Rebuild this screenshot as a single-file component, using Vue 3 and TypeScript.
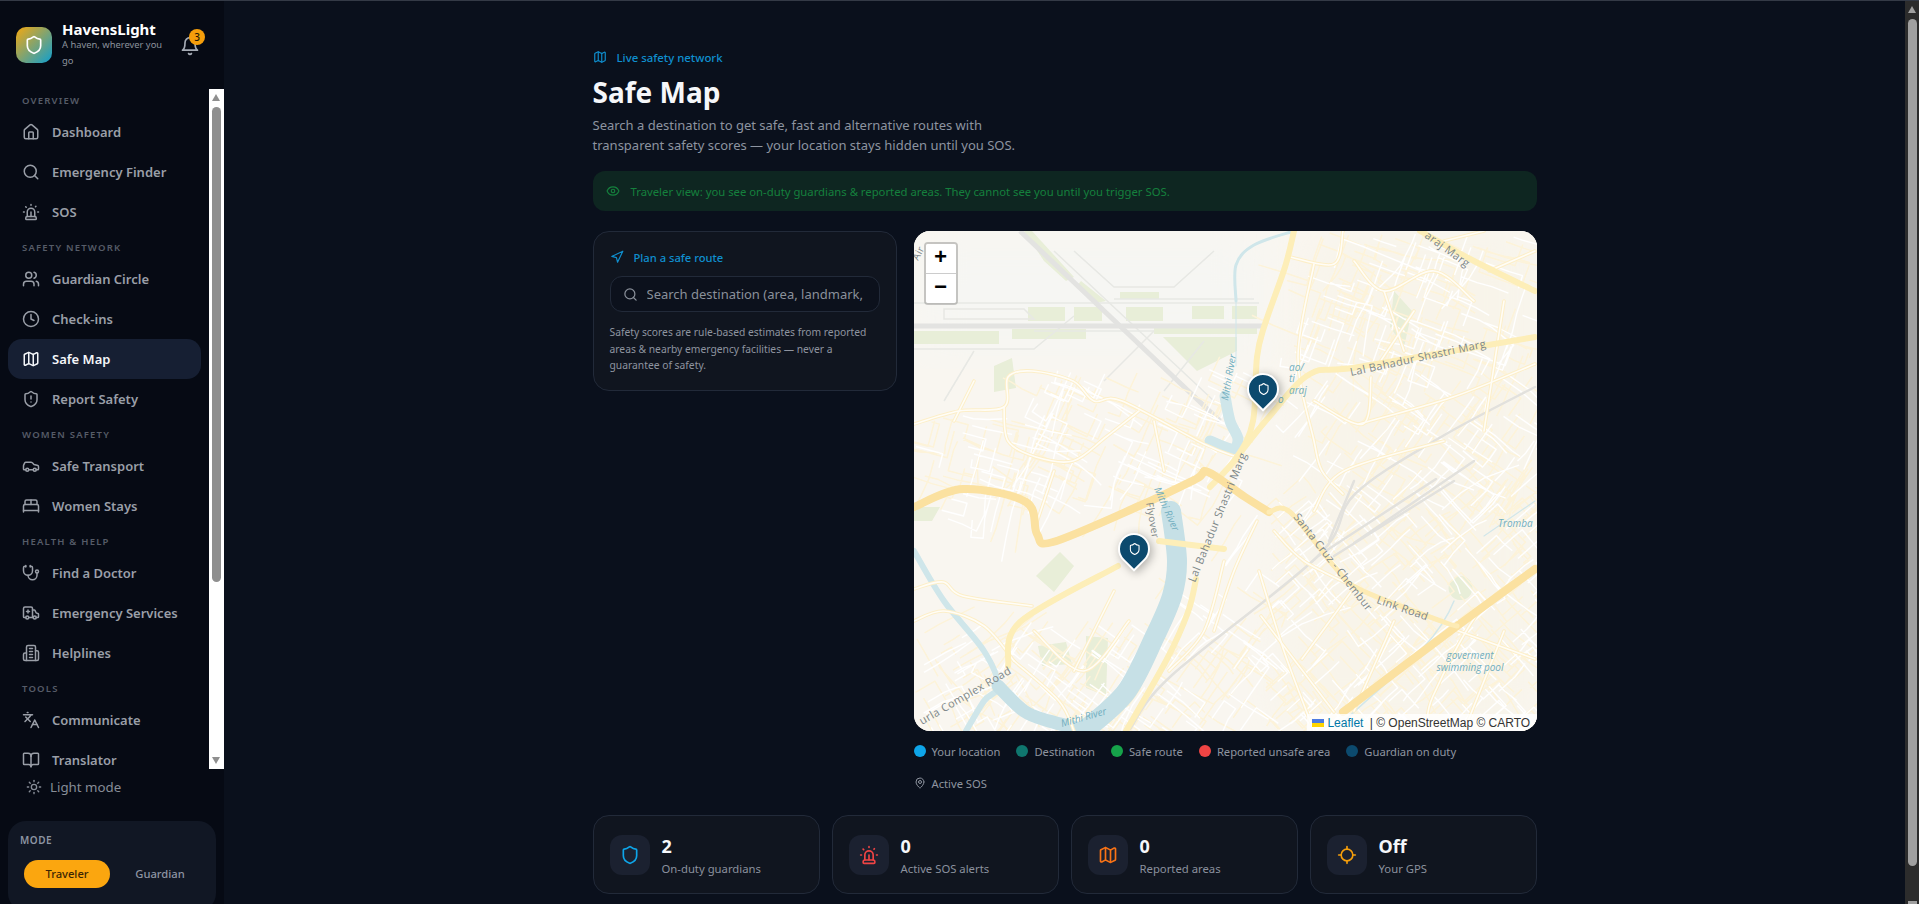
<script setup lang="ts">
const c = (x: number, y: number, r: number) => `M${x - r} ${y}a${r} ${r} 0 1 0 ${r * 2} 0a${r} ${r} 0 1 0 ${-r * 2} 0`

const shield = 'M20 13c0 5-3.5 7.5-7.66 8.95a1 1 0 0 1-.67-.01C7.5 20.5 4 18 4 13V6a1 1 0 0 1 1-1c2 0 4.5-1.2 6.24-2.72a1.17 1.17 0 0 1 1.52 0C14.51 3.81 17 5 19 5a1 1 0 0 1 1 1z'

const icons: Record<string, string[]> = {
  shield: [shield],
  bell: ['M6 8a6 6 0 0 1 12 0c0 7 3 9 3 9H3s3-2 3-9', 'M10.3 21a1.94 1.94 0 0 0 3.4 0'],
  house: ['M15 21v-8a1 1 0 0 0-1-1h-4a1 1 0 0 0-1 1v8', 'M3 10a2 2 0 0 1 .709-1.528l7-5.999a2 2 0 0 1 2.582 0l7 5.999A2 2 0 0 1 21 10v9a2 2 0 0 1-2 2H5a2 2 0 0 1-2-2z'],
  search: [c(11, 11, 8), 'm21 21-4.3-4.3'],
  siren: ['M7 18v-6a5 5 0 1 1 10 0v6', 'M5 21a1 1 0 0 0 1 1h12a1 1 0 0 0 1-1v-1a2 2 0 0 0-2-2H7a2 2 0 0 0-2 2z', 'M21 12h1', 'M18.5 4.5 18 5', 'M2 12h1', 'M12 2v1', 'm4.929 4.929.707.707', 'M12 12v6'],
  users: ['M16 21v-2a4 4 0 0 0-4-4H6a4 4 0 0 0-4 4v2', c(9, 7, 4), 'M22 21v-2a4 4 0 0 0-3-3.87', 'M16 3.13a4 4 0 0 1 0 7.75'],
  clock: [c(12, 12, 10), 'M12 6v6l4 2'],
  map: ['M14.106 5.553a2 2 0 0 0 1.788 0l3.659-1.83A1 1 0 0 1 21 4.619v12.764a1 1 0 0 1-.553.894l-4.553 2.277a2 2 0 0 1-1.788 0l-4.212-2.106a2 2 0 0 0-1.788 0l-3.659 1.83A1 1 0 0 1 3 19.381V6.618a1 1 0 0 1 .553-.894l4.553-2.277a2 2 0 0 1 1.788 0z', 'M15 5.764v15', 'M9 3.236v15'],
  shieldAlert: [shield, 'M12 8v4', 'M12 16h.01'],
  car: ['M19 17h2c.6 0 1-.4 1-1v-3c0-.9-.7-1.7-1.5-1.9C18.7 10.6 16 10 16 10s-1.3-1.4-2.2-2.3c-.5-.4-1.1-.7-1.8-.7H5c-.6 0-1.1.4-1.4.9l-1.4 2.9A3.7 3.7 0 0 0 2 12v4c0 .6.4 1 1 1h2', c(7, 17, 2), 'M9 17h6', c(17, 17, 2)],
  bed: ['M2 20v-8a2 2 0 0 1 2-2h16a2 2 0 0 1 2 2v8', 'M4 10V6a2 2 0 0 1 2-2h12a2 2 0 0 1 2 2v4', 'M12 4v6', 'M2 18h20'],
  stethoscope: ['M11 2v2', 'M5 2v2', 'M5 3H4a2 2 0 0 0-2 2v4a6 6 0 0 0 12 0V5a2 2 0 0 0-2-2h-1', 'M8 15a6 6 0 0 0 12 0v-3', c(20, 10, 2)],
  ambulance: ['M10 10H6', 'M14 18V6a2 2 0 0 0-2-2H4a2 2 0 0 0-2 2v11a1 1 0 0 0 1 1h2', 'M19 18h2a1 1 0 0 0 1-1v-3.28a1 1 0 0 0-.684-.948l-1.923-.641a1 1 0 0 1-.578-.502l-1.539-3.076A1 1 0 0 0 16.382 8H14', 'M8 8v4', 'M9 18h6', c(17, 18, 2), c(7, 18, 2)],
  building: ['M6 22V4a2 2 0 0 1 2-2h8a2 2 0 0 1 2 2v18Z', 'M6 12H4a2 2 0 0 0-2 2v6a2 2 0 0 0 2 2h2', 'M18 9h2a2 2 0 0 1 2 2v9a2 2 0 0 1-2 2h-2', 'M10 6h4', 'M10 10h4', 'M10 14h4', 'M10 18h4'],
  languages: ['m5 8 6 6', 'm4 14 6-6 2-3', 'M2 5h12', 'M7 2h1', 'm22 22-5-10-5 10', 'M14 18h6'],
  book: ['M12 7v14', 'M3 18a1 1 0 0 1-1-1V4a1 1 0 0 1 1-1h5a4 4 0 0 1 4 4 4 4 0 0 1 4-4h5a1 1 0 0 1 1 1v13a1 1 0 0 1-1 1h-6a3 3 0 0 0-3 3 3 3 0 0 0-3-3z'],
  sun: [c(12, 12, 4), 'M12 2v2', 'M12 20v2', 'm4.93 4.93 1.41 1.41', 'm17.66 17.66 1.41 1.41', 'M2 12h2', 'M20 12h2', 'm6.34 17.66-1.41 1.41', 'm19.07 4.93-1.41 1.41'],
  eye: ['M2.062 12.348a1 1 0 0 1 0-.696 10.75 10.75 0 0 1 19.876 0 1 1 0 0 1 0 .696 10.75 10.75 0 0 1-19.876 0', c(12, 12, 3)],
  navigation: ['M3 11 22 2 13 21 11 13z'],
  pin: ['M20 10c0 4.993-5.539 10.193-7.399 11.799a1 1 0 0 1-1.202 0C9.539 20.193 4 14.993 4 10a8 8 0 0 1 16 0', c(12, 10, 3)],
  locate: ['M2 12h3', 'M19 12h3', 'M12 2v3', 'M12 19v3', c(12, 12, 7)],
}

const navGroups = [
  { title: 'Overview', items: [['house', 'Dashboard'], ['search', 'Emergency Finder'], ['siren', 'SOS']] },
  { title: 'Safety Network', items: [['users', 'Guardian Circle'], ['clock', 'Check-ins'], ['map', 'Safe Map'], ['shieldAlert', 'Report Safety']] },
  { title: 'Women Safety', items: [['car', 'Safe Transport'], ['bed', 'Women Stays']] },
  { title: 'Health & Help', items: [['stethoscope', 'Find a Doctor'], ['ambulance', 'Emergency Services'], ['building', 'Helplines']] },
  { title: 'Tools', items: [['languages', 'Communicate'], ['book', 'Translator']] },
]

const legend = [
  { label: 'Your location', color: '#0ea5e9' },
  { label: 'Destination', color: '#0f766e' },
  { label: 'Safe route', color: '#16a34a' },
  { label: 'Reported unsafe area', color: '#ef4444' },
  { label: 'Guardian on duty', color: '#0c4a6e' },
]

const stats = [
  { icon: 'shield', value: '2', label: 'On-duty guardians', color: '#0ea5e9' },
  { icon: 'siren', value: '0', label: 'Active SOS alerts', color: '#ef4444' },
  { icon: 'map', value: '0', label: 'Reported areas', color: '#f97316' },
  { icon: 'locate', value: 'Off', label: 'Your GPS', color: '#f59e0b' },
]

const pins = [
  { left: 333, top: 142 },
  { left: 204, top: 302 },
]

// turns "x y x y ..." into a smooth curve through the points
function smooth(points: string) {
  const n = points.trim().split(/\s+/).map(Number)
  const p: [number, number][] = []
  for (let i = 0; i < n.length; i += 2) p.push([n[i], n[i + 1]])
  let d = `M${p[0][0]} ${p[0][1]}`
  for (let i = 0; i < p.length - 1; i++) {
    const a = p[Math.max(i - 1, 0)]
    const b = p[i]
    const e = p[i + 1]
    const f = p[Math.min(i + 2, p.length - 1)]
    d += `C${(b[0] + (e[0] - a[0]) / 6).toFixed(1)} ${(b[1] + (e[1] - a[1]) / 6).toFixed(1)} ${(e[0] - (f[0] - b[0]) / 6).toFixed(1)} ${(e[1] - (f[1] - b[1]) / 6).toFixed(1)} ${e[0]} ${e[1]}`
  }
  return d
}

// map geometry, in px inside the 623x500 map box
const green = [
  'M0 100h85v13H0z', 'M98 98h74v10H98z', 'M240 96h103v7H240z', 'M114 76h37v14h-37z', 'M160 76h28v14h-28z', 'M212 76h37v14h-37z', 'M278 75h32v13h-32z', 'M318 75h25v13h-25z',
  'M206 61h39v7h-39z', 'M249 106h74v14l-40 20z', 'M110 0h8l42 46-8 4-22-20z', 'M167 50l25 20-10 2-20-16z', 'M80 135l18-8 4 30-22 4z',
  'M122 345l24-24 14 14-20 26z', 'M124 415l28-4 6 22-30 2z', 'M172 405l22 2-2 58-20-8z', 'M480 60l18 20-8 36-14-20z', 'M546 345a12 12 0 1 0 1 0z', 'M0 276h26l-8 14H0z',
]
const airport = [
  'M0 72H345', 'M0 118H120L160 85', 'M140 20 300 170', 'M200 68H340', 'M300 20l-40 36H200L160 20', 'M60 120 30 170', 'M240 100 190 150',
  'M30 78H110L120 88H30z', 'M120 100H240', 'M290 110 250 160',
]
const secondary = [
  '0 193 45 180 90 176 94 146 118 140 159 150 180 170 208 170 290 213 323 226',
  '90 176 94 210 122 226 159 230 192 206 225 180',
  '400 33 384 126 400 210 408 240 429 263',
  '445 193 539 166 621 133',
  '400 170 449 193 457 146',
  '429 0 420 33 376 26',
  '0 358 29 351 49 365 118 375',
  '347 385 420 481',
  '437 361 388 428',
  '621 338 567 378 519 465 514 495',
  '539 398 621 428',
  '445 358 390 330 360 300',
  '100 430 145 470 160 500',
  '0 390 30 380 70 395 100 430',
  '120 400 170 440 215 390',
  '200 360 160 440',
  '500 80 460 140',
  '530 10 570 0',
  '575 40 621 20',
  '590 70 570 200',
  '343 290 320 340 300 400',
  '400 280 430 240 530 210',
  '480 390 440 480',
  '590 400 550 500',
  '310 330 290 400 255 440',
  '440 30 470 60 520 40 560 70',
  '470 60 490 120',
  '345 340 370 420 400 500',
  '60 150 40 190',
  '140 240 120 300',
  '240 190 250 240',
].map(smooth)
const primary = [
  '380 0 371 36 351 93 343 126 339 190 323 226 296 256',
  '323 226 355 186 396 143 445 136 621 106',
  '282 348 274 381 253 428 212 500',
  '245 310 310 318',
  '204 335 106 391 94 435',
  '506 0 560 30 621 60',
].map(smooth)
const major = [
  '0 276 49 258 112 271 123 303 139 311 225 275 282 248 294 241 331 266 355 281',
  '429 481 539 398 621 338',
].map(smooth)
const linkRoad = smooth('355 281 376 281 420 335 445 358 527 390 543 395')
const rail = ['621 156 527 206 441 263 404 325 257 445 216 498', '522 248 404 325', '540 250 420 325', '440 250 415 310', '560 230 440 312'].map(smooth)
const river = {
  upper: smooth('380 0 340 14 322 34 322 70'),
  bend: smooth('311 165 316 190 324 208 318 218 296 210'),
  main: smooth('257 280 263 330 258 365 241 405 212 461 171 499'),
  west: smooth('0 320 30 370 70 420 84 455 70 470 52 500'),
  south: smooth('84 455 110 480 135 490 175 500'),
}

// visible parts only: the tiles cut most of these names at the map edge
const mapLabels = [
  { text: 'Mithi River', x: 314, y: 170, rot: -80, size: 10, water: true },
  { text: 'Lal Bahadur Shastri Marg', x: 437, y: 145, rot: -12, size: 11 },
  { text: 'araj Marg', x: 510, y: 6, rot: 36, size: 11 },
  { text: 'Air', x: 4, y: 30, rot: -62, size: 10 },
  { text: 'Lal Bahadur Shastri Marg', x: 281, y: 352, rot: -68, size: 11 },
  { text: 'Flyover', x: 232, y: 272, rot: 80, size: 10 },
  { text: 'urla Complex Road', x: 8, y: 494, rot: -30, size: 11 },
  { text: 'Mithi River', x: 148, y: 496, rot: -16, size: 10, water: true },
  { text: 'Mithi River', x: 240, y: 258, rot: 66, size: 10, water: true },
  { text: 'Santa Cruz - Chembur', x: 379, y: 286, rot: 52, size: 11 },
  { text: 'Link Road', x: 462, y: 372, rot: 19, size: 11 },
  { text: 'ao/', x: 375, y: 140, rot: 0, size: 10, water: true },
  { text: 'ti', x: 375, y: 151, rot: 0, size: 10, water: true },
  { text: 'araj', x: 375, y: 163, rot: 0, size: 10, water: true },
  { text: 'o', x: 364, y: 172, rot: 0, size: 10, water: true },
  { text: 'Tromba', x: 584, y: 296, rot: 0, size: 10, water: true },
]

// small streets: a seeded scatter so the town texture stays the same on every load
function streets(seed: number, scale: number) {
  let s = seed
  const rnd = () => (s = (s * 16807) % 2147483647) / 2147483647
  const zones = [
    [390, 0, 623, 130, 20, 50], [410, 140, 623, 260, 35, 40], [350, 260, 623, 400, -42, 60], [340, 400, 623, 500, -42, 50],
    [90, 390, 250, 500, 35, 35], [0, 400, 100, 500, -30, 14], [120, 140, 330, 260, 25, 40], [0, 180, 120, 270, 15, 16], [240, 330, 340, 500, -55, 18],
  ]
  let d = ''
  for (const [x0, y0, x1, y1, a, n] of zones) {
    for (let i = 0; i < n * scale; i++) {
      let x = x0 + rnd() * (x1 - x0)
      let y = y0 + rnd() * (y1 - y0)
      let ang = a + (rnd() > 0.5 ? 90 : 0)
      d += `M${x.toFixed(1)} ${y.toFixed(1)}`
      const legs = 2 + Math.floor(rnd() * 3)
      for (let k = 0; k < legs; k++) {
        const len = 8 + rnd() * 20
        x += Math.cos((ang * Math.PI) / 180) * len
        y += Math.sin((ang * Math.PI) / 180) * len
        d += `L${x.toFixed(1)} ${y.toFixed(1)}`
        ang += rnd() > 0.7 ? 90 : (rnd() - 0.5) * 24
      }
    }
  }
  return d
}
const smallStreets = streets(4217, 1.3)
const tinyStreets = streets(90331, 1.8)
</script>

<template>
  <div class="layout">
    <aside class="sidebar">
      <div class="brand">
        <div class="logo">
          <svg class="ic" viewBox="0 0 24 24" width="20" height="20"><path v-for="d in icons.shield" :key="d" :d="d" /></svg>
        </div>
        <div class="brand-text">
          <div class="brand-name">HavensLight</div>
          <div class="brand-sub">A haven, wherever you go</div>
        </div>
        <div class="bell">
          <svg class="ic" viewBox="0 0 24 24" width="20" height="20"><path v-for="d in icons.bell" :key="d" :d="d" /></svg>
          <span class="badge">3</span>
        </div>
      </div>

      <div class="nav-wrap">
        <nav class="nav">
          <template v-for="group in navGroups" :key="group.title">
            <div class="nav-title">{{ group.title }}</div>
            <a v-for="item in group.items" :key="item[1]" class="nav-item" :class="{ active: item[1] === 'Safe Map' }">
              <svg class="ic" viewBox="0 0 24 24" width="18" height="18"><path v-for="d in icons[item[0]]" :key="d" :d="d" /></svg>
              <span>{{ item[1] }}</span>
            </a>
          </template>
        </nav>
        <div class="rail">
          <i class="arrow up"></i>
          <i class="thumb"></i>
          <i class="arrow down"></i>
        </div>
      </div>

      <div class="side-foot">
        <div class="theme-btn">
          <svg class="ic" viewBox="0 0 24 24" width="16" height="16"><path v-for="d in icons.sun" :key="d" :d="d" /></svg>
          <span>Light mode</span>
        </div>
        <div class="mode">
          <div class="mode-title">MODE</div>
          <div class="mode-row">
            <span class="mode-pill on">Traveler</span>
            <span class="mode-pill">Guardian</span>
          </div>
        </div>
      </div>
    </aside>

    <main class="main">
      <div class="content">
        <div class="eyebrow">
          <svg class="ic" viewBox="0 0 24 24" width="14" height="14"><path v-for="d in icons.map" :key="d" :d="d" /></svg>
          <span>Live safety network</span>
        </div>
        <h1>Safe Map</h1>
        <p class="lead">Search a destination to get safe, fast and alternative routes with transparent safety scores — your location stays hidden until you SOS.</p>

        <div class="banner">
          <svg class="ic" viewBox="0 0 24 24" width="14" height="14"><path v-for="d in icons.eye" :key="d" :d="d" /></svg>
          <span>Traveler view: you see on-duty guardians &amp; reported areas. They cannot see you until you trigger SOS.</span>
        </div>

        <div class="grid">
          <section class="panel">
            <div class="panel-head">
              <svg class="ic" viewBox="0 0 24 24" width="14" height="14"><path v-for="d in icons.navigation" :key="d" :d="d" /></svg>
              <span>Plan a safe route</span>
            </div>
            <div class="search">
              <svg class="ic" viewBox="0 0 24 24" width="15" height="15"><path v-for="d in icons.search" :key="d" :d="d" /></svg>
              <input type="text" placeholder="Search destination (area, landmark, address)" />
            </div>
            <p class="note">Safety scores are rule-based estimates from reported areas &amp; nearby emergency facilities — never a guarantee of safety.</p>
          </section>

          <div>
            <div class="map">
              <svg class="tiles" viewBox="0 0 623 500" width="623" height="500">
                <defs>
                  <filter id="soft" x="0" y="0" width="100%" height="100%"><feGaussianBlur stdDeviation="0.35" /></filter>
                  <filter id="wash" x="-10%" y="-10%" width="120%" height="120%"><feGaussianBlur stdDeviation="24" /></filter>
                </defs>
                <rect width="623" height="500" fill="#f9f6f0" />
                <rect width="350" height="125" fill="#f6f6f3" filter="url(#wash)" />
                <path d="M400 0H623V500H360z" fill="#f8f4ea" filter="url(#wash)" />
                <g filter="url(#soft)">
                  <path v-for="d in green" :key="d" :d="d" fill="#e8eed8" />
                  <g fill="none" stroke="#e7e8e4" stroke-width="1.5">
                    <path v-for="d in airport" :key="d" :d="d" />
                  </g>
                  <path d="M0 95H350" stroke="#e3e3e1" stroke-width="5" fill="none" />
                  <path d="M106 0 306 190" stroke="#e3e3e1" stroke-width="5" fill="none" />
                  <path :d="tinyStreets" stroke="#fdf3d9" stroke-width="1.5" fill="none" stroke-linejoin="round" />
                  <path :d="smallStreets" stroke="#ffffff" stroke-width="1.4" fill="none" stroke-linejoin="round" />
                  <g fill="none" stroke-linecap="round" stroke-linejoin="round">
                    <path :d="river.upper" stroke="#cfe6ea" stroke-width="3" />
                    <path d="M322 70V135" stroke="#cfe6ea" stroke-width="1" />
                    <path :d="river.bend" stroke="#cfe6ea" stroke-width="11" />
                    <path :d="river.main" stroke="#c6e0e6" stroke-width="20" />
                    <path :d="river.west" stroke="#cfe6ea" stroke-width="6" />
                    <path :d="river.south" stroke="#c6e0e6" stroke-width="13" />
                    <path d="M420 500C470 450 520 420 540 370" stroke="#d2e7ea" stroke-width="1.5" />
                    <path d="M621 270 570 305" stroke="#d2e7ea" stroke-width="1.2" />
                    <path v-for="d in rail" :key="d" :d="d" stroke="#e2e1dd" stroke-width="2.5" />
                    <path v-for="d in secondary" :key="d" :d="d" stroke="#fdefc9" stroke-width="3.6" />
                    <path v-for="d in secondary" :key="'in' + d" :d="d" stroke="#fffdf7" stroke-width="1.6" />
                    <path v-for="d in primary" :key="d" :d="d" stroke="#fdeeb8" stroke-width="6" />
                    <path v-for="d in major" :key="d" :d="d" stroke="#fbe1a0" stroke-width="8" />
                    <path :d="linkRoad" stroke="#fdebb5" stroke-width="5" />
                  </g>
                </g>
                <text
                  v-for="l in mapLabels"
                  :key="l.text + l.x"
                  class="map-label"
                  :class="{ wet: l.water }"
                  :font-size="l.size"
                  :transform="`translate(${l.x} ${l.y}) rotate(${l.rot})`"
                >{{ l.text }}</text>
                <text class="map-label wet" font-size="10" text-anchor="middle" transform="translate(556 428)">goverment</text>
                <text class="map-label wet" font-size="10" text-anchor="middle" transform="translate(556 440)">swimming pool</text>
              </svg>

              <div class="zoom">
                <a class="zoom-btn">+</a>
                <a class="zoom-btn">−</a>
              </div>

              <div v-for="p in pins" :key="p.left" class="pin" :style="{ left: p.left + 'px', top: p.top + 'px' }">
                <svg class="ic" viewBox="0 0 24 24" width="13" height="13"><path v-for="d in icons.shield" :key="d" :d="d" /></svg>
              </div>

              <div class="attrib">
                <svg viewBox="0 0 12 8" width="12" height="8"><rect width="12" height="4" fill="#4c7be1" /><rect y="4" width="12" height="4" fill="#ffd500" /></svg>
                <a>Leaflet</a> | © OpenStreetMap © CARTO
              </div>
            </div>

            <div class="legend">
              <span v-for="l in legend" :key="l.label" class="legend-item">
                <i class="dot" :style="{ background: l.color }"></i>{{ l.label }}
              </span>
              <span class="legend-item sos">
                <svg class="ic" viewBox="0 0 24 24" width="12" height="12"><path v-for="d in icons.pin" :key="d" :d="d" /></svg>Active SOS
              </span>
            </div>
          </div>
        </div>

        <div class="stats">
          <div v-for="s in stats" :key="s.label" class="stat">
            <div class="stat-icon" :style="{ color: s.color }">
              <svg class="ic" viewBox="0 0 24 24" width="20" height="20"><path v-for="d in icons[s.icon]" :key="d" :d="d" /></svg>
            </div>
            <div>
              <div class="stat-value">{{ s.value }}</div>
              <div class="stat-label">{{ s.label }}</div>
            </div>
          </div>
        </div>
      </div>
    </main>

    <div class="page-rail">
      <i class="arrow up"></i>
      <i class="thumb"></i>
      <i class="stub"></i>
    </div>
  </div>
</template>

<style>
html,
body {
  margin: 0;
  background: #0a101c;
}
</style>

<style scoped>
.layout {
  display: flex;
  padding-right: 14px;
  border-top: 1px solid #343a46;
  font-family: "Noto Sans", sans-serif;
  color: #fff;
}
.ic {
  fill: none;
  stroke: currentColor;
  stroke-width: 2;
  stroke-linecap: round;
  stroke-linejoin: round;
  flex: none;
}
.sidebar {
  position: sticky;
  top: 0;
  flex: none;
  width: 224px;
  height: calc(100vh - 1px);
  display: flex;
  flex-direction: column;
  overflow: hidden;
  background: #060a14;
}
.brand {
  flex: none;
  height: 88px;
  box-sizing: border-box;
  padding: 26px 16px 0;
  display: flex;
  align-items: flex-start;
}
.logo {
  flex: none;
  width: 36px;
  height: 36px;
  border-radius: 10px;
  background: linear-gradient(135deg, #f5a80f, #0e9fd0);
  display: flex;
  align-items: center;
  justify-content: center;
  color: #fff;
}
.brand-text {
  width: 108px;
  margin-left: 10px;
}
.brand-name {
  font-size: 15px;
  line-height: 20px;
  margin-top: -8px;
  font-weight: 700;
  white-space: nowrap;
}
.brand-sub {
  margin-top: -2px;
  font-size: 9.4px;
  line-height: 16px;
  color: #8c929c;
}
.bell {
  position: relative;
  margin: 9px 0 0 10px;
  height: 20px;
  color: #a5abb5;
}
.badge {
  position: absolute;
  top: -7px;
  left: 9px;
  width: 16px;
  height: 16px;
  border-radius: 50%;
  background: #f59e0b;
  color: #241803;
  font-size: 10px;
  line-height: 16px;
  text-align: center;
  font-weight: 500;
}
.nav-wrap {
  position: relative;
  flex: 1;
  min-height: 0;
}
.nav {
  height: 100%;
  overflow: hidden;
  box-sizing: border-box;
  padding: 4px 23px 0 8px;
}
.rail {
  position: absolute;
  top: 0;
  right: 0;
  bottom: 0;
  width: 15px;
  background: #fff;
}
.rail .thumb,
.page-rail .thumb {
  position: absolute;
  left: 3px;
  width: 9px;
  border-radius: 5px;
}
.rail .thumb {
  top: 18px;
  height: 475px;
  background: #8f8f8f;
}
.arrow {
  position: absolute;
  left: 3px;
  width: 0;
  height: 0;
  border-left: 4.5px solid transparent;
  border-right: 4.5px solid transparent;
}
.arrow.up {
  top: 5px;
  border-bottom: 7px solid #8f8f8f;
}
.arrow.down {
  bottom: 5px;
  border-top: 7px solid #8f8f8f;
}
.page-rail {
  position: fixed;
  top: 1px;
  right: 0;
  bottom: 0;
  width: 14px;
  background: #2c2c2c;
}
.page-rail .arrow.up {
  border-bottom-color: #a0a0a0;
}
.page-rail .thumb {
  top: 18px;
  height: 847px;
  background: #a0a0a0;
}
.page-rail .stub {
  position: absolute;
  left: 3px;
  bottom: 0;
  width: 9px;
  height: 3px;
  background: #a0a0a0;
}
.nav-title {
  margin: 8px 0 4px 14px;
  font-size: 9.5px;
  line-height: 15px;
  font-weight: 600;
  letter-spacing: 1.2px;
  text-transform: uppercase;
  color: #565c68;
}
.nav-title:first-child {
  margin-top: 0;
}
.nav-item {
  display: flex;
  align-items: center;
  gap: 12px;
  height: 40px;
  padding-left: 14px;
  border-radius: 14px;
  font-size: 13px;
  font-weight: 600;
  color: #9a9fa8;
}
.nav-item.active {
  background: #161f33;
  color: #f4f6f9;
}
.side-foot {
  flex: none;
  height: 135px;
}
.theme-btn {
  display: flex;
  align-items: center;
  gap: 8px;
  height: 36px;
  padding-left: 26px;
  font-size: 13.3px;
  color: #878d97;
}
.mode {
  margin: 16px 8px 0;
  height: 90px;
  box-sizing: border-box;
  padding: 12px 12px 0;
  border-radius: 18px;
  background: #111724;
}
.mode-title {
  font-size: 10px;
  line-height: 14px;
  font-weight: 600;
  letter-spacing: 0.5px;
  color: #8d95a3;
}
.mode-row {
  display: grid;
  grid-template-columns: 86px 1fr;
  gap: 6px;
  margin: 13px 0 0 4px;
}
.mode-pill {
  height: 28px;
  border-radius: 14px;
  font-size: 11.2px;
  font-weight: 500;
  line-height: 28px;
  text-align: center;
  color: #8e95a3;
}
.mode-pill.on {
  background: #fba60f;
  color: #3b2503;
}
.main {
  flex: 1;
  min-width: 0;
}
.content {
  max-width: 1024px;
  margin: 0 auto;
  padding: 48px 40px 38px;
  box-sizing: border-box;
}
.eyebrow {
  display: flex;
  align-items: center;
  gap: 10px;
  height: 16px;
  font-size: 11.4px;
  font-weight: 500;
  color: #0f8fcf;
}
h1 {
  margin: 9px 0 0;
  font-size: 28px;
  line-height: 36px;
  font-weight: 700;
  color: #f5f7fa;
}
.lead {
  margin: 5px 0 0;
  max-width: 448px;
  font-size: 13px;
  line-height: 20px;
  color: #8d94a0;
}
.banner {
  display: flex;
  align-items: center;
  gap: 11px;
  height: 40px;
  margin-top: 16px;
  padding-left: 13px;
  border-radius: 12px;
  background: #0e2621;
  font-size: 11.3px;
  color: #15803d;
}
.grid {
  display: grid;
  grid-template-columns: 304px 1fr;
  gap: 17px;
  margin-top: 20px;
  align-items: start;
}
.panel {
  box-sizing: border-box;
  padding: 16px;
  border: 1px solid #222a39;
  border-radius: 16px;
  background: #10151f;
}
.panel-head {
  display: flex;
  align-items: center;
  gap: 10px;
  height: 18px;
  font-size: 11.2px;
  font-weight: 500;
  color: #0f8fcf;
}
.search {
  display: flex;
  align-items: center;
  height: 36px;
  box-sizing: border-box;
  margin-top: 10px;
  padding: 0 16px 0 12px;
  border: 1px solid #222a39;
  border-radius: 12px;
  background: #0c111c;
  color: #8a909a;
}
.search input {
  flex: 1;
  min-width: 0;
  margin-left: 9px;
  padding: 0;
  border: 0;
  outline: 0;
  background: none;
  font: 400 13px "Noto Sans", sans-serif;
  color: #d0d4da;
}
.search input::placeholder {
  color: #8a909a;
  opacity: 1;
}
.note {
  margin: 12px 0 0;
  font-size: 10.3px;
  line-height: 16.5px;
  color: #8e949f;
}
.map {
  position: relative;
  height: 500px;
  border-radius: 16px;
  overflow: hidden;
  background: #f8f5ef;
}
.tiles {
  display: block;
}
.map-label {
  font-family: "Open Sans", sans-serif;
  font-weight: 500;
  letter-spacing: 0.4px;
  fill: #7d8789;
}
.map-label.wet {
  font-style: italic;
  fill: #71aebf;
  letter-spacing: 0;
}
.zoom {
  position: absolute;
  top: 11px;
  left: 10px;
  border: 2px solid rgba(0, 0, 0, 0.2);
  border-radius: 4px;
  background-clip: padding-box;
}
.zoom-btn {
  display: block;
  width: 30px;
  height: 29px;
  background: #fff;
  font: 700 22px/29px "Liberation Mono", monospace;
  text-align: center;
  color: #000;
}
.zoom-btn:first-child {
  border-bottom: 1px solid #ccc;
  border-radius: 2px 2px 0 0;
}
.zoom-btn:last-child {
  border-radius: 0 0 2px 2px;
}
.pin {
  position: absolute;
  width: 32px;
  height: 32px;
  box-sizing: border-box;
  display: flex;
  align-items: center;
  justify-content: center;
  border: 2px solid #fff;
  border-radius: 50% 50% 50% 0;
  transform: rotate(-45deg);
  background: #0c4a6e;
  box-shadow: 0 3px 10px rgba(0, 0, 0, 0.3);
  color: #fff;
}
.pin .ic {
  transform: rotate(45deg);
}
.attrib {
  position: absolute;
  right: 0;
  bottom: 0;
  display: flex;
  align-items: center;
  gap: 3px;
  height: 17px;
  padding: 0 3px 0 5px;
  background: rgba(255, 255, 255, 0.8);
  font: 12px "Liberation Sans", sans-serif;
  white-space: pre;
  color: #333;
}
.attrib a {
  color: #0078a8;
}
.legend {
  display: flex;
  flex-wrap: wrap;
  gap: 16px;
  margin-top: 12px;
}
.legend-item {
  display: flex;
  align-items: center;
  gap: 6px;
  height: 16px;
  font-size: 11.2px;
  color: #8f95a0;
}
.dot {
  width: 12px;
  height: 12px;
  border-radius: 50%;
}
.stats {
  display: grid;
  grid-template-columns: repeat(4, 1fr);
  gap: 12px;
  margin-top: 24px;
}
.stat {
  display: flex;
  align-items: center;
  gap: 12px;
  padding: 16px;
  border: 1px solid #222a39;
  border-radius: 16px;
  background: #10151f;
}
.stat-icon {
  flex: none;
  width: 40px;
  height: 40px;
  display: flex;
  align-items: center;
  justify-content: center;
  border-radius: 12px;
  background: #1b2130;
}
.stat-value {
  font-size: 18px;
  line-height: 28px;
  font-weight: 700;
  color: #f5f7fa;
}
.stat-label {
  margin-top: 1px;
  font-size: 11.3px;
  line-height: 16px;
  color: #8b919e;
}
</style>
